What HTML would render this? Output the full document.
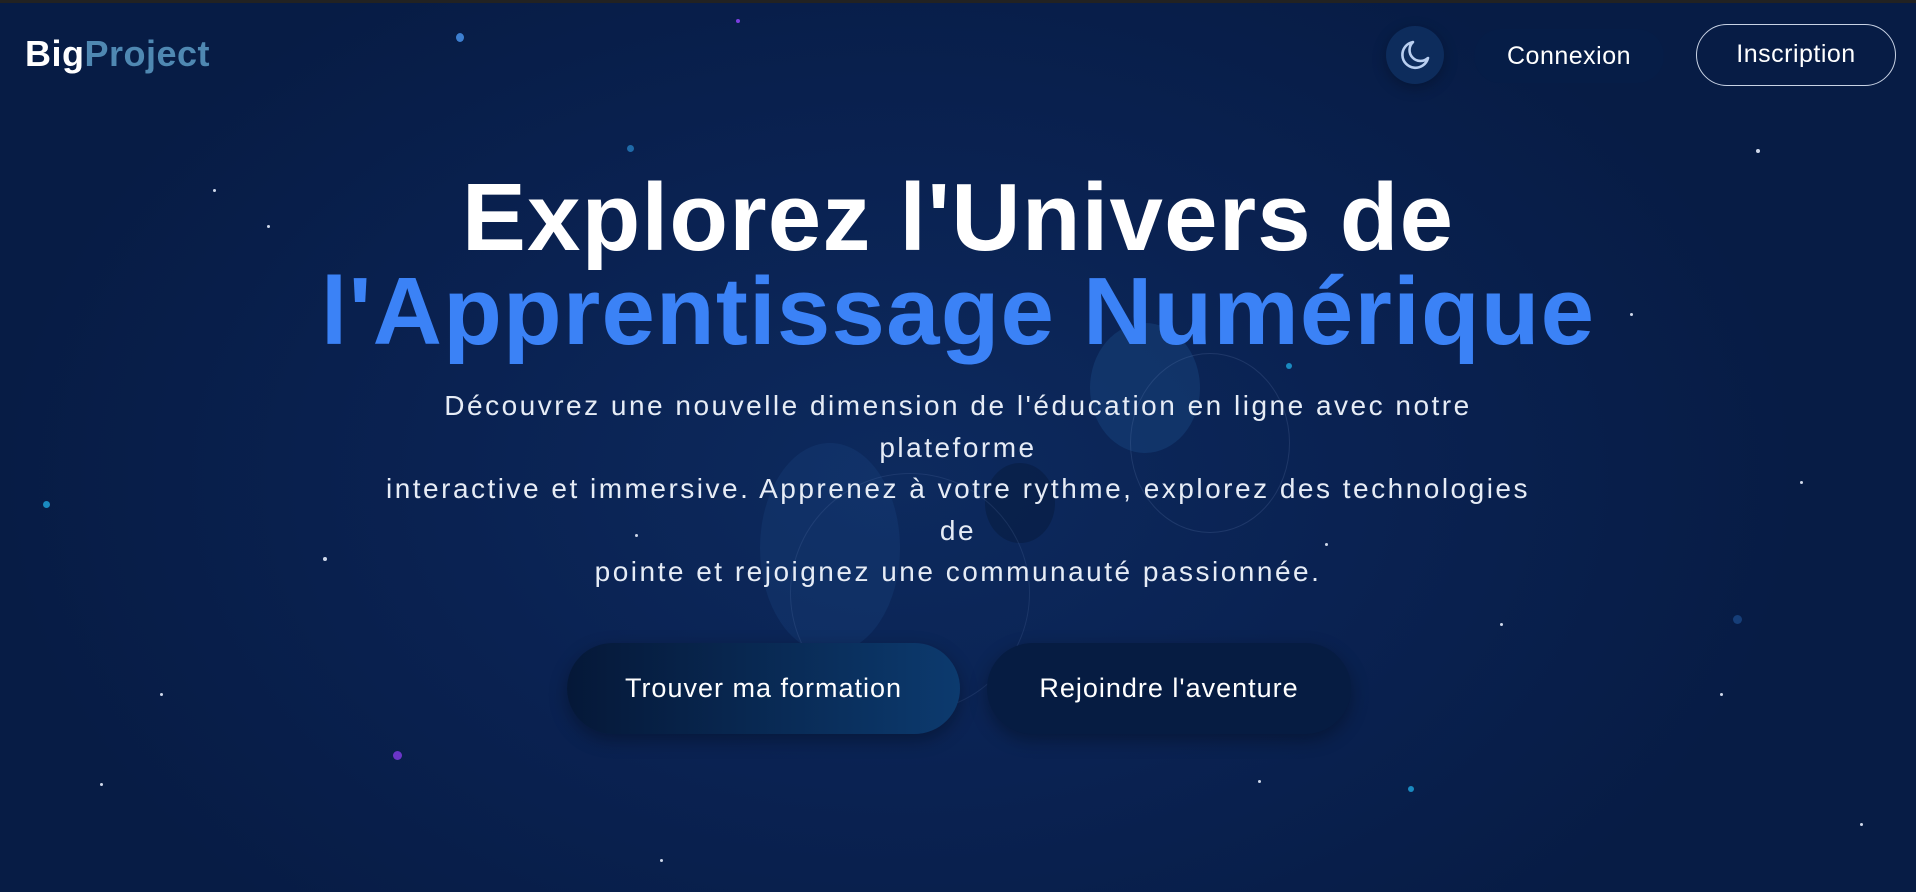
<!DOCTYPE html>
<html><head><meta charset="utf-8">
<style>
*{margin:0;padding:0;box-sizing:border-box}
html,body{width:1916px;height:892px;overflow:hidden}
body{font-family:"Liberation Sans",sans-serif;color:#fff;position:relative;
background:radial-gradient(ellipse 900px 600px at 900px 480px,#0d2a5e 0%,#0a2252 50%,#071c45 100%);border-top:3px solid #222}
.s{position:absolute;border-radius:50%;background:#cfd8ea}
.logo{position:absolute;left:25px;top:30px;font-size:36px;font-weight:700;letter-spacing:0.5px}
.logo span{color:#4f88b2}
.moon{position:absolute;left:1386px;top:23px;width:58px;height:58px;border-radius:50%;background:#0d2c5c;box-shadow:0 4px 14px rgba(0,0,0,.25)}
.con{position:absolute;left:1474px;top:26px;width:190px;height:54px;border-radius:27px;background:#061d47;text-align:center;line-height:54px;font-size:25px;letter-spacing:0.5px}
.ins{position:absolute;left:1696px;top:21px;width:200px;height:62px;border-radius:31px;border:1.5px solid #c8d2e4;text-align:center;line-height:59px;font-size:25px;letter-spacing:0.5px}
h1{position:absolute;left:0;width:1916px;text-align:center;font-weight:700;font-size:96px;line-height:94px;top:168px;letter-spacing:1.2px}
h1 .b{color:#3b82f6}
p{position:absolute;left:0;width:1916px;top:382px;text-align:center;font-size:28px;line-height:41.5px;color:#e6ecf6;letter-spacing:2.5px}
.btn{position:absolute;top:640px;height:91px;border-radius:46px;text-align:center;line-height:91px;font-size:27px;letter-spacing:1px}
.b1{left:567px;width:393px;background:linear-gradient(90deg,#051838,#0c3a6e);box-shadow:0 6px 18px rgba(0,0,0,.3)}
.b2{left:987px;width:364px;background:#061c42;box-shadow:0 6px 18px rgba(0,0,0,.3)}
.orb{position:absolute;border-radius:50%}
</style></head><body>
<div class="orb" style="left:1090px;top:320px;width:110px;height:130px;background:rgba(30,80,140,.35)"></div>
<div class="orb" style="left:760px;top:440px;width:140px;height:210px;background:rgba(25,70,130,.3)"></div>
<div class="orb" style="left:985px;top:460px;width:70px;height:80px;background:rgba(5,25,60,.5)"></div>
<div class="orb" style="left:1130px;top:350px;width:160px;height:180px;border:1px solid rgba(120,150,200,.18)"></div>
<div class="orb" style="left:790px;top:470px;width:240px;height:240px;border:1px solid rgba(120,150,200,.15)"></div>
<div class="s" style="left:456px;top:30px;width:8px;height:9px;background:#3d7fd0"></div>
<div class="s" style="left:736px;top:16px;width:4px;height:4px;background:#7b3ee0"></div>
<div class="s" style="left:627px;top:142px;width:7px;height:7px;background:#1f6aa8"></div>
<div class="s" style="left:43px;top:498px;width:7px;height:7px;background:#1a8ac0"></div>
<div class="s" style="left:393px;top:748px;width:9px;height:9px;background:#6a35c8"></div>
<div class="s" style="left:1286px;top:360px;width:6px;height:6px;background:#1a8ac0"></div>
<div class="s" style="left:1408px;top:783px;width:6px;height:6px;background:#1a8ac0"></div>
<div class="s" style="left:1733px;top:612px;width:9px;height:9px;background:#163e78"></div>
<div class="s" style="left:1756px;top:146px;width:4px;height:4px"></div>
<div class="s" style="left:213px;top:186px;width:3px;height:3px"></div>
<div class="s" style="left:267px;top:222px;width:3px;height:3px"></div>
<div class="s" style="left:323px;top:554px;width:4px;height:4px"></div>
<div class="s" style="left:1325px;top:540px;width:3px;height:3px"></div>
<div class="s" style="left:1800px;top:478px;width:3px;height:3px"></div>
<div class="s" style="left:635px;top:531px;width:3px;height:3px"></div>
<div class="s" style="left:1258px;top:777px;width:3px;height:3px"></div>
<div class="s" style="left:100px;top:780px;width:3px;height:3px"></div>
<div class="s" style="left:1860px;top:820px;width:3px;height:3px"></div>
<div class="s" style="left:1720px;top:690px;width:3px;height:3px"></div>
<div class="s" style="left:660px;top:856px;width:3px;height:3px"></div>
<div class="s" style="left:1500px;top:620px;width:3px;height:3px"></div>
<div class="s" style="left:160px;top:690px;width:3px;height:3px"></div>
<div class="s" style="left:1630px;top:310px;width:3px;height:3px"></div>
<div class="logo">Big<span>Project</span></div>
<div class="moon"><svg width="58" height="58" viewBox="0 0 58 58"><path d="M27 16 A13 13 0 1 0 42 32 A10 10 0 0 1 27 16 Z" fill="none" stroke="#b9cff0" stroke-width="2.6" stroke-linejoin="round"/></svg></div>
<div class="con">Connexion</div>
<div class="ins">Inscription</div>
<h1>Explorez l'Univers de<br><span class="b">l'Apprentissage Numérique</span></h1>
<p>Découvrez une nouvelle dimension de l'éducation en ligne avec notre<br>plateforme<br>interactive et immersive. Apprenez à votre rythme, explorez des technologies<br>de<br>pointe et rejoignez une communauté passionnée.</p>
<div class="btn b1">Trouver ma formation</div>
<div class="btn b2">Rejoindre l'aventure</div>
</body></html>
